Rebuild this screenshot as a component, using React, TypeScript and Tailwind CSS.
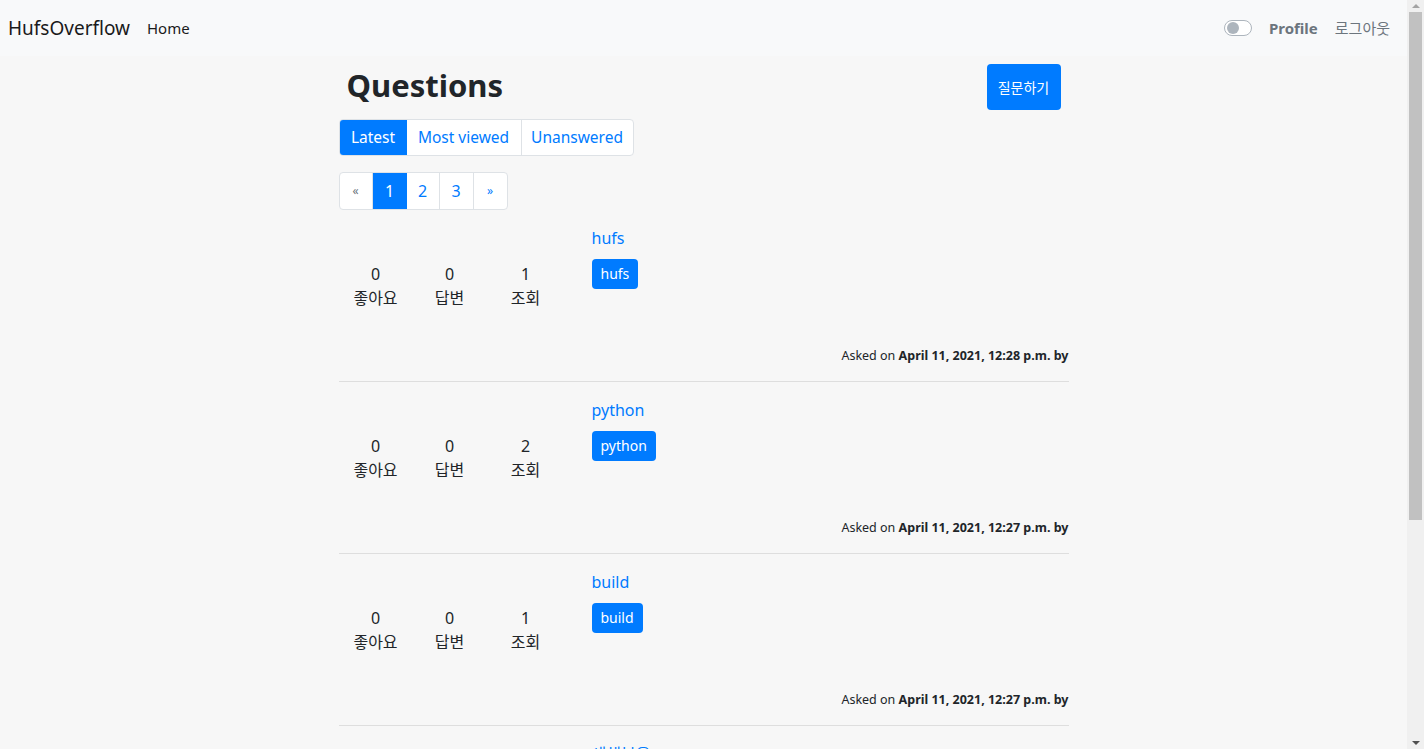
const FONT = "font-['Noto_Sans','Noto_Sans_CJK_KR',sans-serif]";

type Question = {
  title: string;
  tag: string;
  likes: number;
  answers: number;
  views: number;
  asked: string;
};

const QUESTIONS: Question[] = [
  { title: 'hufs', tag: 'hufs', likes: 0, answers: 0, views: 1, asked: 'April 11, 2021, 12:28 p.m.' },
  { title: 'python', tag: 'python', likes: 0, answers: 0, views: 2, asked: 'April 11, 2021, 12:27 p.m.' },
  { title: 'build', tag: 'build', likes: 0, answers: 0, views: 1, asked: 'April 11, 2021, 12:27 p.m.' },
  { title: '새해복을', tag: 'new', likes: 0, answers: 0, views: 3, asked: 'April 11, 2021, 12:26 p.m.' },
  { title: 'django', tag: 'django', likes: 0, answers: 0, views: 4, asked: 'April 11, 2021, 12:25 p.m.' },
];

function Stat({ value, label }: { value: number; label: string }) {
  return (
    <div className="flex w-[74px] flex-col items-center text-[16px] leading-[24px] text-[#212529]">
      <span>{value}</span>
      <span>{label}</span>
    </div>
  );
}

function QuestionRow({ q }: { q: Question }) {
  return (
    <div className="border-b border-[#dedede] pt-[16px] pb-[15px]">
      <div className="flex h-[120px]">
        <div className="flex w-[253px] pt-[36px]">
          <Stat value={q.likes} label="좋아요" />
          <Stat value={q.answers} label="답변" />
          <div className="ml-[2px]">
            <Stat value={q.views} label="조회" />
          </div>
        </div>
        <div className="flex flex-col items-start">
          <a className="text-[16px] leading-[24px] text-[#007bff]">{q.title}</a>
          <span className="mt-[9px] rounded-[4px] bg-[#007bff] px-[9px] py-[4px] text-[14px] leading-[22px] font-normal text-white">
            {q.tag}
          </span>
        </div>
      </div>
      <div className="text-right text-[12.5px] leading-[20px] text-[#212529]">
        Asked on <b>{q.asked} by</b>
      </div>
    </div>
  );
}

// the browser's scrollbar, as seen in the screenshot
function Scrollbar() {
  return (
    <aside className="flex h-screen w-[17px] shrink-0 flex-col items-center bg-[#f0f0f0]">
      <span className="mt-[4px] h-0 w-0 border-x-[4px] border-b-[4px] border-x-transparent border-b-[#a3a3a3]" />
      <span className="mt-[4px] h-[508px] w-[13px] bg-[#c1c1c1]" />
      <span className="mt-auto mb-[4px] h-0 w-0 border-x-[4px] border-t-[4px] border-x-transparent border-t-[#505050]" />
    </aside>
  );
}

export default function App() {
  return (
    <div className={`${FONT} flex h-screen overflow-hidden bg-[#f7f7f7]`}>
      <div className="min-w-0 flex-1">
        <nav className="flex h-[56px] items-center bg-[#f8f9fa] pr-[17px] pl-[8px]">
          <span className="text-[19px] text-[#1a1a1a]">HufsOverflow</span>
          <a className="ml-[17px] text-[15px] text-[#1a1a1a]">Home</a>
          <div className="ml-auto flex items-center">
            <span className="flex h-[16px] w-[28px] items-center rounded-full border border-[#adb5bd] bg-white px-[2px]">
              <span className="h-[12px] w-[12px] rounded-full bg-[#adb5bd]" />
            </span>
            <span className="ml-[17px] text-[15px] font-bold text-[#6c757d]">Profile</span>
            <span className="ml-[17px] text-[15px] text-[#6c757d]">로그아웃</span>
          </div>
        </nav>

        <main className="mx-auto w-[730px]">
          <div className="mt-[8px] flex items-start justify-between">
            <h1 className="mt-[1px] pl-[8px] text-[31px] leading-[40px] font-bold text-[#212529]">Questions</h1>
            <button
              type="button"
              className="mr-[8px] h-[46px] w-[74px] rounded-[4px] bg-[#007bff] text-[14px] text-white"
            >
              질문하기
            </button>
          </div>

          <div className="mt-[9px] inline-flex h-[37px] overflow-hidden rounded-[4px] border border-[#dee2e6] bg-white text-[15.5px]">
            <span className="flex w-[67px] items-center justify-center bg-[#007bff] text-white">Latest</span>
            <span className="flex w-[115px] items-center justify-center border-r border-[#dee2e6] text-[#007bff]">
              Most viewed
            </span>
            <span className="flex w-[111px] items-center justify-center text-[#007bff]">Unanswered</span>
          </div>

          <div className="mt-[16px] flex">
            <div className="flex h-[38px] overflow-hidden rounded-[4px] border border-[#dee2e6] bg-white text-[16px]">
              <span className="flex w-[33px] items-center justify-center border-r border-[#dee2e6] text-[12px] text-[#6c757d]">
                «
              </span>
              <span className="flex w-[34px] items-center justify-center bg-[#007bff] text-white">1</span>
              <span className="flex w-[33px] items-center justify-center border-r border-[#dee2e6] text-[#007bff]">2</span>
              <span className="flex w-[34px] items-center justify-center border-r border-[#dee2e6] text-[#007bff]">3</span>
              <span className="flex w-[33px] items-center justify-center text-[12px] text-[#007bff]">»</span>
            </div>
          </div>

          <div>
            {QUESTIONS.map((q) => (
              <QuestionRow key={q.title} q={q} />
            ))}
          </div>
        </main>
      </div>
      <Scrollbar />
    </div>
  );
}
